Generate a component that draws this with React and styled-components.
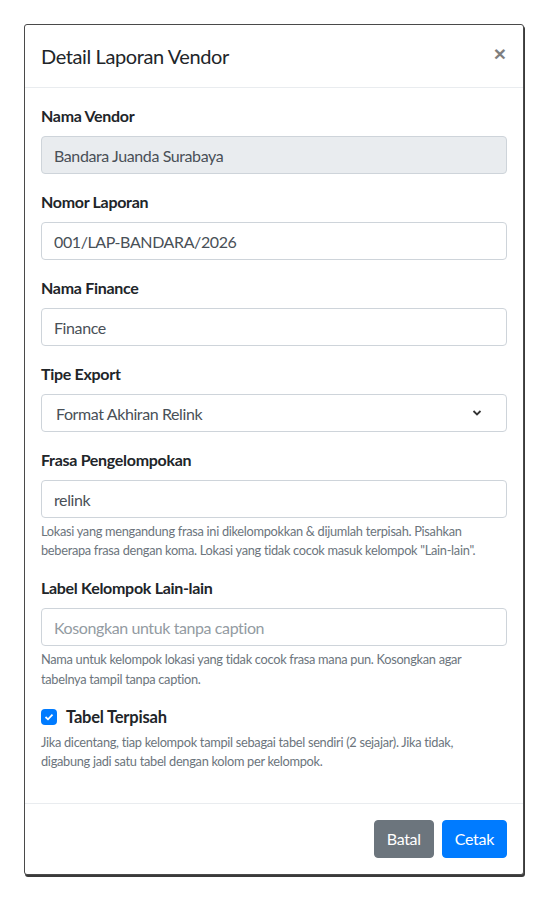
import React from "react";
import styled, { createGlobalStyle } from "styled-components";

const GlobalStyle = createGlobalStyle`
  * { box-sizing: border-box; }
  body {
    margin: 0;
    background: #ffffff;
    font-family: "Lato", "Noto Sans", sans-serif;
    color: #212529;
    letter-spacing: -0.4px;
  }
`;

const Page = styled.div`
  padding: 24px 0 0 24px;
  width: 548px;
  height: 900px;
`;

const Modal = styled.div`
  width: 500px;
  background: #fff;
  border: 1px solid #4a4a4a;
  border-radius: 3px;
  box-shadow: 1px 2px 0 #3a3a3a;
`;

const Header = styled.div`
  display: flex;
  align-items: center;
  justify-content: space-between;
  padding: 16px;
  border-bottom: 1px solid #e9ecef;
`;

const Title = styled.h4`
  margin: 0;
  font-size: 20px;
  font-weight: 400;
  line-height: 30px;
`;

const Close = styled.button`
  border: 0;
  background: transparent;
  padding: 0;
  margin: -4px 1px 0 0;
  font-size: 21px;
  font-weight: 700;
  line-height: 30px;
  color: #000;
  opacity: 0.5;
  font-family: "Liberation Sans", sans-serif;
`;

const Body = styled.div`
  padding: 16px;
`;

const Group = styled.div`
  margin-bottom: 16px;
`;

const Label = styled.label`
  display: block;
  margin-bottom: 8px;
  font-size: 16px;
  font-weight: 700;
  line-height: 24px;
  letter-spacing: -0.3px;
`;

const Input = styled.input`
  display: block;
  width: 100%;
  height: 38px;
  padding: 6px 12px;
  font-family: inherit;
  font-size: 16px;
  line-height: 24px;
  letter-spacing: -0.4px;
  color: #495057;
  background: ${(p) => (p.disabled ? "#e9ecef" : "#fff")};
  border: 1px solid #ced4da;
  border-radius: 4px;
  outline: none;

  &::placeholder {
    color: #939ba2;
  }
`;

const SelectWrap = styled.div`
  position: relative;
`;

const Select = styled.select`
  display: block;
  width: 100%;
  height: 38px;
  padding: 6px 32px 6px 14px;
  font-family: inherit;
  font-size: 16px;
  letter-spacing: -0.4px;
  color: #495057;
  background: #fff;
  border: 1px solid #ced4da;
  border-radius: 4px;
  appearance: none;
  outline: none;
`;

const Chevron = styled.svg`
  position: absolute;
  right: 25px;
  top: 15px;
  pointer-events: none;
`;

const Help = styled.small`
  display: block;
  margin-top: 4px;
  font-size: 12.8px;
  line-height: 19.2px;
  letter-spacing: -0.3px;
  color: #6c757d;
`;

const CheckRow = styled.label`
  display: flex;
  align-items: center;
  gap: 9px;
  font-size: 16.5px;
  font-weight: 700;
  line-height: 24px;
  letter-spacing: -0.2px;
`;

const CheckBox = styled.span`
  display: inline-flex;
  align-items: center;
  justify-content: center;
  width: 16px;
  height: 16px;
  border-radius: 4px;
  background: #007bff;
`;

const Footer = styled.div`
  display: flex;
  justify-content: flex-end;
  gap: 8px;
  padding: 16px;
  border-top: 1px solid #e9ecef;
`;

const Button = styled.button`
  height: 38px;
  padding: 6px 12px;
  font-family: inherit;
  font-size: 16px;
  line-height: 24px;
  letter-spacing: -0.3px;
  color: #fff;
  background: ${(p) => (p.$variant === "primary" ? "#007bff" : "#6c757d")};
  border: 1px solid ${(p) => (p.$variant === "primary" ? "#007bff" : "#6c757d")};
  border-radius: 4px;
`;

export default function App() {
  return (
    <Page>
      <GlobalStyle />
      <Modal>
        <Header>
          <Title>Detail Laporan Vendor</Title>
          <Close>×</Close>
        </Header>
        <Body>
          <Group>
            <Label>Nama Vendor</Label>
            <Input disabled defaultValue="Bandara Juanda Surabaya" />
          </Group>
          <Group>
            <Label>Nomor Laporan</Label>
            <Input defaultValue="001/LAP-BANDARA/2026" />
          </Group>
          <Group>
            <Label>Nama Finance</Label>
            <Input defaultValue="Finance" />
          </Group>
          <Group>
            <Label>Tipe Export</Label>
            <SelectWrap>
              <Select defaultValue="relink">
                <option value="relink">Format Akhiran Relink</option>
              </Select>
              <Chevron width="10" height="8" viewBox="0 0 10 8">
                <path d="M1.5 2 L5 5.5 L8.5 2" fill="none" stroke="#333" strokeWidth="1.8" />
              </Chevron>
            </SelectWrap>
          </Group>
          <Group>
            <Label>Frasa Pengelompokan</Label>
            <Input defaultValue="relink" />
            <Help>
              Lokasi yang mengandung frasa ini dikelompokkan &amp; dijumlah terpisah. Pisahkan
              <br />
              beberapa frasa dengan koma. Lokasi yang tidak cocok masuk kelompok "Lain-lain".
            </Help>
          </Group>
          <Group>
            <Label>Label Kelompok Lain-lain</Label>
            <Input placeholder="Kosongkan untuk tanpa caption" />
            <Help>
              Nama untuk kelompok lokasi yang tidak cocok frasa mana pun. Kosongkan agar
              <br />
              tabelnya tampil tanpa caption.
            </Help>
          </Group>
          <Group>
            <CheckRow>
              <CheckBox>
                <svg width="10" height="8" viewBox="0 0 10 8">
                  <path d="M1.5 4 L4 6.3 L8.5 1.7" fill="none" stroke="#fff" strokeWidth="1.8" />
                </svg>
              </CheckBox>
              Tabel Terpisah
            </CheckRow>
            <Help>
              Jika dicentang, tiap kelompok tampil sebagai tabel sendiri (2 sejajar). Jika tidak,
              <br />
              digabung jadi satu tabel dengan kolom per kelompok.
            </Help>
          </Group>
        </Body>
        <Footer>
          <Button>Batal</Button>
          <Button $variant="primary">Cetak</Button>
        </Footer>
      </Modal>
    </Page>
  );
}
